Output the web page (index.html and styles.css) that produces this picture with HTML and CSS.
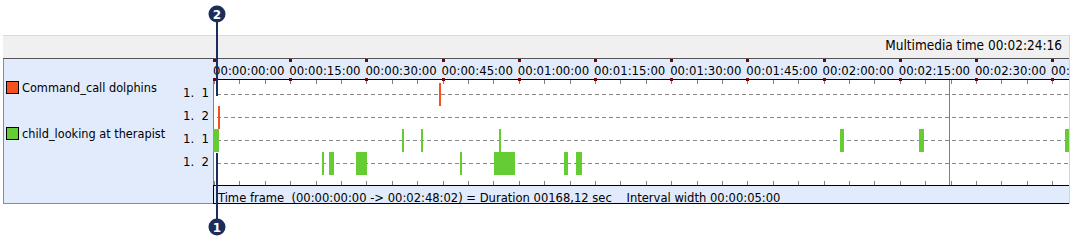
FILE: index.html
```html
<!DOCTYPE html>
<html lang="en">
<head>
    <meta charset="UTF-8">
    <meta name="viewport" content="width=device-width, initial-scale=1.0">
    <title>Timeline</title>
    <link rel="stylesheet" href="styles.css">
</head>
<body>
    <div class="page">
        <div class="panel">
            <div class="header">Multimedia time 00:02:24:16</div>
            <div class="main">
                <div class="legend">
                    <div class="group">
                        <div class="name"><span class="swatch orange"></span>Command_call dolphins</div>
                        <div class="num">1.  1</div>
                        <div class="num">1.  2</div>
                    </div>
                    <div class="group">
                        <div class="name"><span class="swatch green"></span>child_looking at therapist</div>
                        <div class="num">1.  1</div>
                        <div class="num">1.  2</div>
                    </div>
                </div>
                <div class="timeline">
                    <div class="ruler">
                        <span class="tick">00:00:00:00</span>
                        <span class="tick">00:00:15:00</span>
                        <span class="tick">00:00:30:00</span>
                        <span class="tick">00:00:45:00</span>
                        <span class="tick">00:01:00:00</span>
                        <span class="tick">00:01:15:00</span>
                        <span class="tick">00:01:30:00</span>
                        <span class="tick">00:01:45:00</span>
                        <span class="tick">00:02:00:00</span>
                        <span class="tick">00:02:15:00</span>
                        <span class="tick">00:02:30:00</span>
                        <span class="tick">00:02:45:00</span>
                    </div>
                    <div class="tracks">
                        <div class="row">
                            <span class="bar orange" style="left:226px;width:2px"></span>
                        </div>
                        <div class="row">
                            <span class="bar orange" style="left:5px;width:2px"></span>
                        </div>
                        <div class="row">
                            <span class="bar green" style="left:0px;width:6px"></span>
                            <span class="bar green" style="left:189px;width:2px"></span>
                            <span class="bar green" style="left:208px;width:2px"></span>
                            <span class="bar green" style="left:286px;width:2px"></span>
                            <span class="bar green" style="left:627px;width:4px"></span>
                            <span class="bar green" style="left:706px;width:5px"></span>
                            <span class="bar green" style="left:852px;width:4px"></span>
                        </div>
                        <div class="row">
                            <span class="bar green" style="left:109px;width:2px"></span>
                            <span class="bar green" style="left:116px;width:5px"></span>
                            <span class="bar green" style="left:143px;width:11px"></span>
                            <span class="bar green" style="left:247px;width:2px"></span>
                            <span class="bar green" style="left:281px;width:21px"></span>
                            <span class="bar green" style="left:351px;width:4px"></span>
                            <span class="bar green" style="left:363px;width:6px"></span>
                        </div>
                        <span class="cursor" style="left:736px"></span>
                    </div>
                    <div class="status">Time frame  (00:00:00:00 -&gt; 00:02:48:02) = Duration 00168,12 sec    Interval width 00:00:05:00</div>
                </div>
            </div>
        </div>

        <!-- callouts -->
        <svg class="callout callout-top" width="20" height="93" viewBox="0 0 20 93">
            <rect x="9" y="16" width="2" height="76" fill="#1b2d5c"/>
            <circle cx="10" cy="10" r="8.5" fill="#1b2d5c"/>
            <text x="10" y="14.5" text-anchor="middle">2</text>
        </svg>
        <svg class="callout callout-bottom" width="20" height="88" viewBox="0 0 20 88">
            <rect x="9" y="1" width="2" height="67" fill="#1b2d5c"/>
            <circle cx="10" cy="75" r="8.5" fill="#1b2d5c"/>
            <text x="10" y="79.5" text-anchor="middle">1</text>
        </svg>
    </div>
</body>
</html>
```

FILE: styles.css
```css
body {
    margin: 0;
    background-color: #ffffff;
    font-family: "DejaVu Sans Condensed", "DejaVu Sans", sans-serif;
    font-size: 13px;
    color: #000;
}

.page {
    position: relative;
    height: 240px;
    padding-top: 35px;
    box-sizing: border-box;
}

.panel {
    margin-left: 3px;
    width: 1066px;
    border-top: 1px solid #cddcf0;
    border-right: 1px solid #c6d8ef;
}

.header {
    height: 22px;
    box-sizing: border-box;
    background-color: #f0f0f0;
    text-align: right;
    padding-right: 7px;
    font-size: 13.5px;
    line-height: 19px;
}

.main {
    display: grid;
    grid-template-columns: 210px 856px;
    border-top: 1px solid #555;
}

/* left column with category names */
.legend {
    background-color: #e2ebfc;
    border-left: 1px solid #8c8c8c;
    border-bottom: 1px solid #8c8c8c;
    padding-top: 24px;
}

.group {
    display: grid;
    grid-template-columns: 1fr auto;
    grid-template-rows: 23px 23px;
}

.name {
    grid-column: 1;
    grid-row: 1 / 3;
    align-self: start;
    display: flex;
    align-items: center;
    gap: 3px;
    height: 15px;
    line-height: 15px;
    margin-top: -3px;
    padding-left: 2px;
    font-size: 12.6px;
}

.swatch {
    width: 11px;
    height: 11px;
    border: 1px solid #000;
}

.swatch.orange,
.bar.orange {
    background-color: #f4511e;
}

.swatch.green,
.bar.green {
    background-color: #66cc33;
}

.num {
    grid-column: 2;
    align-self: start;
    line-height: 19px;
    padding-right: 4px;
    white-space: pre;
    text-align: right;
}

/* timeline column */
.timeline {
    overflow: hidden;
}

.ruler {
    display: flex;
    height: 20px;
    background-color: #e2ebfc;
    border-bottom: 1px solid #000;
}

.tick {
    position: relative;
    flex: none;
    width: 76.2px;
    height: 20px;
    box-sizing: border-box;
    padding-top: 3px;
    line-height: 18px;
    white-space: nowrap;
}

.tick::before,
.tick::after {
    content: "";
    position: absolute;
    left: 0;
    width: 3px;
    height: 3px;
    background-color: #7b0000;
    z-index: 1;
}

.tick::before {
    top: 0;
}

.tick::after {
    bottom: -2px;
}

.tracks {
    position: relative;
    height: 105px;
    box-sizing: border-box;
    padding-top: 3px;
    background:
        linear-gradient(#808080, #808080) 0 0 / 1px 100% no-repeat,
        repeating-linear-gradient(to right, #808080 0 1px, transparent 1px 25.4px) 1px 0 / 100% 4px no-repeat,
        repeating-linear-gradient(to right, #808080 0 1px, transparent 1px 25.4px) 1px 100% / 100% 4px no-repeat,
        #ffffff;
}

.row {
    position: relative;
    height: 23px;
    background: repeating-linear-gradient(to right, #888 0 4px, transparent 4px 7px) 4px 11px / 100% 1px no-repeat;
}

.bar {
    position: absolute;
    top: 0;
    height: 23px;
}

.cursor {
    position: absolute;
    top: 0;
    bottom: 0;
    width: 1px;
    background-color: #808080;
}

.status {
    height: 19px;
    box-sizing: border-box;
    padding: 4px 0 0 4px;
    line-height: 15px;
    font-size: 12.85px;
    background-color: #e2ebfc;
    border-top: 1px solid #000;
    border-bottom: 1px solid #000;
    border-left: 1px solid #000;
    white-space: pre;
}

/* numbered markers drawn over the chart */
.callout {
    position: absolute;
    left: 207px;
}

.callout text {
    fill: #fff;
    font-family: "DejaVu Sans", sans-serif;
    font-weight: bold;
    font-size: 12px;
}

.callout-top {
    top: 4px;
}

.callout-bottom {
    top: 152px;
}
```
